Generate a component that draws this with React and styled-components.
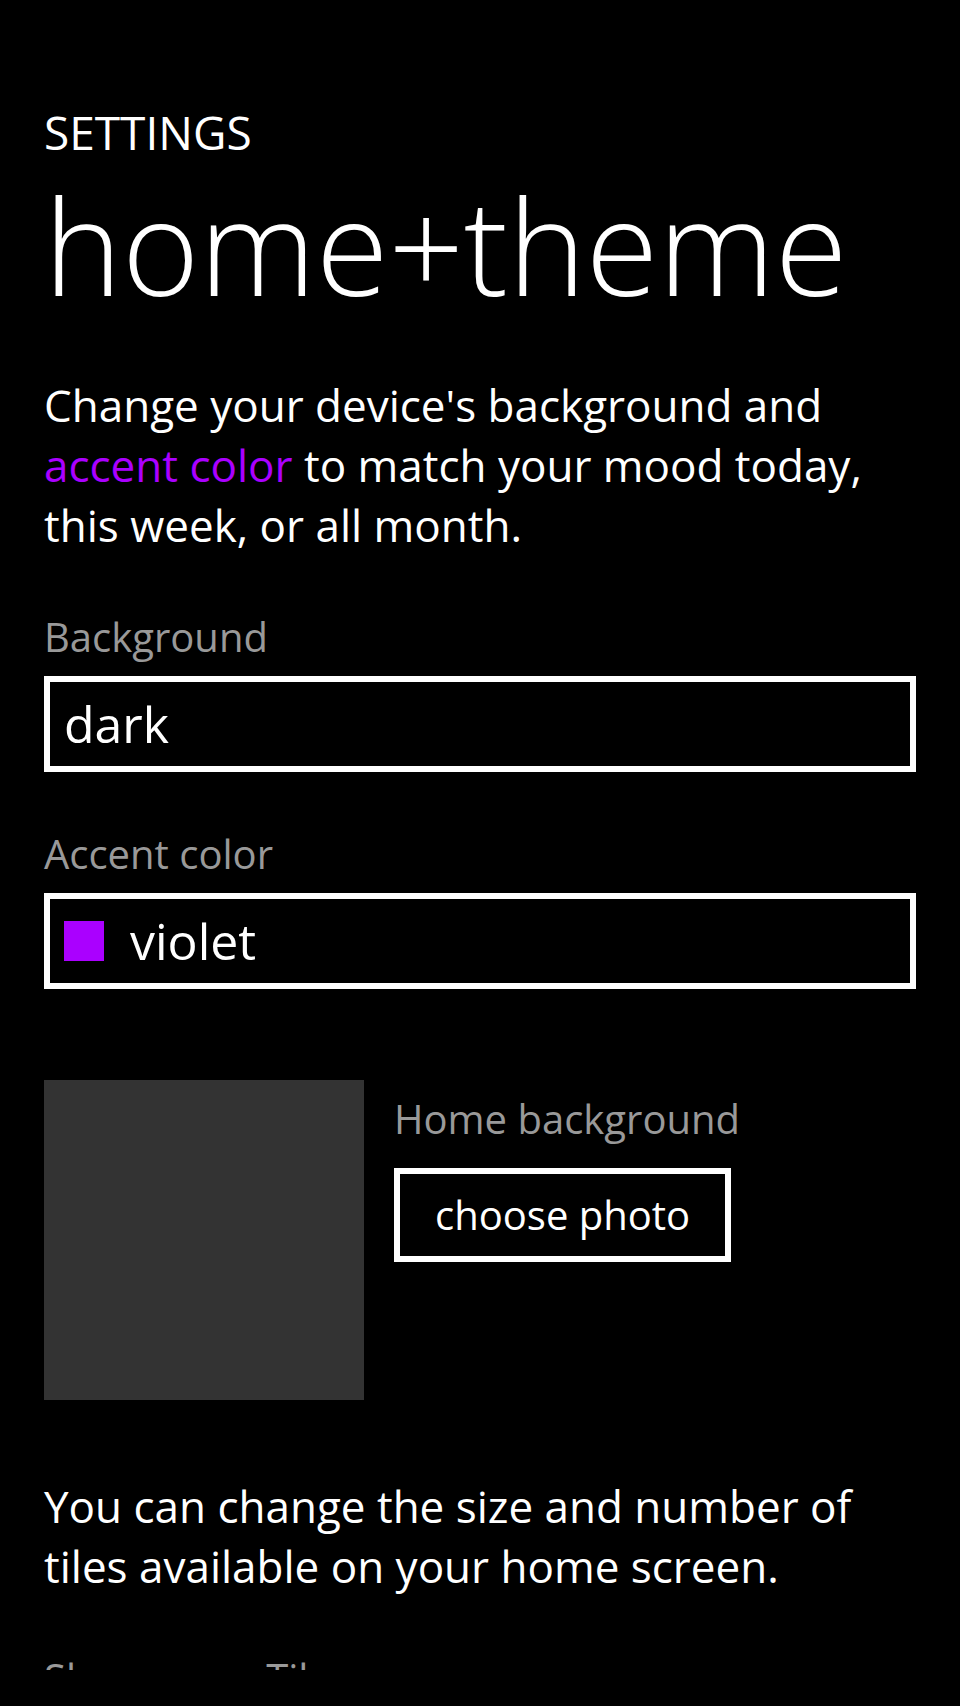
import styled, { createGlobalStyle } from "styled-components";

const GlobalStyle = createGlobalStyle`
  html, body {
    margin: 0;
    padding: 0;
    background: #000000;
  }
  body {
    font-family: "Open Sans", "Noto Sans", sans-serif;
    color: #ffffff;
  }
  * {
    box-sizing: border-box;
  }
`;

const ACCENT = "#aa00ff";

function App() {
  return (
    <Page>
      <GlobalStyle />
      <Viewport>
        <AppTitle>SETTINGS</AppTitle>
        <PageTitle>home+theme</PageTitle>

        <Paragraph $gap={60}>
          Change your device's background and <Accent>accent color</Accent> to
          match your mood today, this week, or all month.
        </Paragraph>

        <Field>
          <Label>Background</Label>
          <Picker>
            <span>dark</span>
          </Picker>
        </Field>

        <Field>
          <Label>Accent color</Label>
          <Picker>
            <Swatch $color={ACCENT} />
            <span>violet</span>
          </Picker>
        </Field>

        <HomeRow>
          <Preview />
          <HomeColumn>
            <Label>Home background</Label>
            <Button>choose photo</Button>
          </HomeColumn>
        </HomeRow>

        <Paragraph $gap={76}>
          You can change the size and number of tiles available on your home
          screen.
        </Paragraph>

        <Field>
          <Label>Show more Tiles</Label>
        </Field>
      </Viewport>
    </Page>
  );
}

export default App;

const Page = styled.div`
  width: 960px;
  height: 1706px;
  background: #000000;
`;

const Viewport = styled.div`
  height: 1670px;
  overflow: hidden;
  padding: 102px 44px 0 44px;
`;

const AppTitle = styled.div`
  font-size: 46px;
  line-height: 60px;
  font-weight: 400;
`;

const PageTitle = styled.h1`
  margin: 13px 0 0 0;
  font-size: 132px;
  line-height: 140px;
  font-weight: 300;
`;

const Paragraph = styled.p`
  margin: ${(p) => p.$gap}px 0 0 0;
  font-size: 44px;
  line-height: 60px;
`;

const Accent = styled.span`
  color: ${ACCENT};
`;

const Field = styled.div`
  margin-top: 58px;
  display: flex;
  flex-direction: column;
`;

const Label = styled.div`
  font-size: 40px;
  line-height: 48px;
  color: #999999;
`;

const Picker = styled.div`
  margin-top: 15px;
  height: 96px;
  border: 6px solid #ffffff;
  display: flex;
  align-items: center;
  gap: 26px;
  padding: 0 14px;
  font-size: 50px;
  line-height: 84px;
`;

const Swatch = styled.div`
  width: 40px;
  height: 40px;
  background: ${(p) => p.$color};
`;

const HomeRow = styled.div`
  margin-top: 91px;
  display: flex;
  gap: 30px;
`;

const Preview = styled.div`
  width: 320px;
  height: 320px;
  background: #333333;
`;

const HomeColumn = styled.div`
  padding-top: 15px;
  display: flex;
  flex-direction: column;
  align-items: flex-start;
`;

const Button = styled.button`
  margin-top: 25px;
  height: 94px;
  padding: 0 35px;
  border: 6px solid #ffffff;
  background: transparent;
  color: #ffffff;
  font-family: "Open Sans", "Noto Sans", sans-serif;
  font-size: 40px;
  line-height: 82px;
  cursor: pointer;
`;
